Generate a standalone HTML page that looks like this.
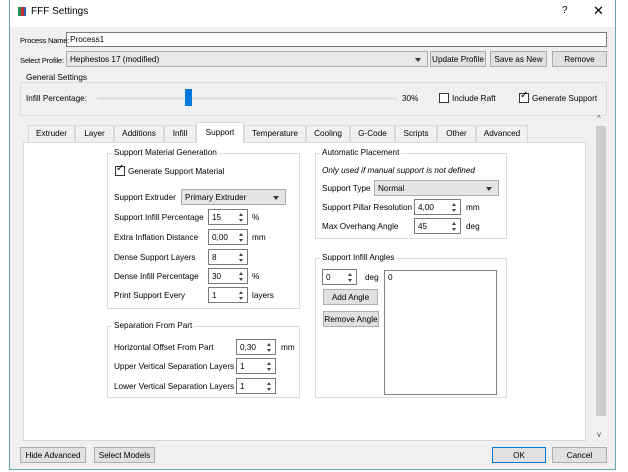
<!DOCTYPE html>
<html><head><meta charset="utf-8"><style>
*{box-sizing:border-box;margin:0;padding:0}
body{width:628px;height:472px;background:#fff;font-family:"Liberation Sans",sans-serif;font-size:8.2px;color:#000;position:relative;overflow:hidden}
.a{position:absolute;white-space:nowrap}
#win{position:absolute;left:9px;top:0;width:607px;height:470px;border:1px solid #6aa5b3;border-top:none;background:#f0f0f0}
.in{position:absolute;background:#fff;border:1px solid #7a7a7a;padding-left:3px;line-height:14px;white-space:nowrap}
.btn{position:absolute;background:#e1e1e1;border:1px solid #adadad;text-align:center;line-height:15px;white-space:nowrap;overflow:hidden}
.grp{position:absolute;border:1px solid #dcdcdc}
.gl{position:absolute;background:#fff;padding:0 2px;line-height:10px;white-space:nowrap}
.cb{position:absolute;width:10px;height:10px;border:1px solid #333;background:#fff}
.spin{position:absolute;background:#fff;border:1px solid #7a7a7a;height:16px;line-height:15px;padding-left:3px;white-space:nowrap}
.spin:before{content:"";position:absolute;right:4px;top:3px;border:2px solid transparent;border-bottom:3px solid #444;border-top:none}
.spin:after{content:"";position:absolute;right:4px;top:9px;border:2px solid transparent;border-top:3px solid #444;border-bottom:none}
.cmb{position:absolute;background:#e5e5e5;border:1px solid #adadad;height:16px;line-height:15px;padding-left:3px;white-space:nowrap}
.cmb:after{content:"";position:absolute;right:6px;top:6px;border:3px solid transparent;border-top:4px solid #333}
.tab{position:absolute;top:125px;height:17px;border:1px solid #d9d9d9;border-bottom:none;background:#f0f0f0;text-align:center;line-height:16px;white-space:nowrap}
</style></head><body>
<div id="win"></div>
<div class="a" style="left:0;top:0;width:628px;height:27px;background:#fff"></div>
<div class="a" style="left:9px;top:0;width:1px;height:470px;background:#6aa5b3"></div>
<div class="a" style="left:615px;top:0;width:1px;height:470px;background:#6aa5b3"></div>
<div class="a" style="left:18px;top:7px;width:3px;height:9px;background:#2a8a5a"></div>
<div class="a" style="left:21px;top:7px;width:3px;height:9px;background:#c03030"></div>
<div class="a" style="left:24px;top:7px;width:2px;height:9px;background:#3060b0"></div>
<div class="a" style="left:31px;top:6px;font-size:10px">FFF Settings</div>
<div class="a" style="left:562px;top:5px;font-size:10px">?</div>
<div class="a" style="left:593px;top:3px;font-size:13px">✕</div>

<div class="in" style="left:66px;top:32px;width:541px;height:15px">Process1</div>
<div class="a" style="left:20px;top:36px;font-size:7.6px;letter-spacing:-0.2px">Process Name:</div>
<div class="cmb" style="left:66px;top:51px;width:362px;background:#e8e8e8">Hephestos 17 (modified)</div>
<div class="a" style="left:20px;top:56px;font-size:7.6px;letter-spacing:-0.2px">Select Profile:</div>
<div class="btn" style="left:430px;top:51px;width:56px;height:16px">Update Profile</div>
<div class="btn" style="left:490px;top:51px;width:57px;height:16px">Save as New</div>
<div class="btn" style="left:552px;top:51px;width:55px;height:16px">Remove</div>

<div class="grp" style="left:20px;top:82px;width:587px;height:34px"></div>
<div class="a" style="left:25px;top:73px;background:#f0f0f0;padding:0 1px">General Settings</div>
<div class="a" style="left:26px;top:94px">Infill Percentage:</div>
<div class="a" style="left:97px;top:97px;width:301px;height:3px;background:#e0e0e0;border:1px solid #e6e6e6"></div>
<div class="a" style="left:185px;top:89px;width:7px;height:17px;background:#0078d7"></div>
<div class="a" style="left:402px;top:94px">30%</div>
<div class="cb" style="left:439px;top:93px"></div>
<div class="a" style="left:452px;top:94px">Include Raft</div>
<div class="cb" style="left:519px;top:93px"></div>
<div class="a" style="left:520px;top:90px;font-size:10px">✓</div>
<div class="a" style="left:532px;top:94px">Generate Support</div>

<div class="a" style="left:23px;top:142px;width:563px;height:299px;background:#fff;border:1px solid #d9d9d9"></div>
<div class="tab" style="left:28px;width:47px">Extruder</div>
<div class="tab" style="left:75px;width:39px">Layer</div>
<div class="tab" style="left:114px;width:50px">Additions</div>
<div class="tab" style="left:164px;width:32px">Infill</div>
<div class="tab" style="left:196px;width:48px;top:122px;height:21px;background:#fff;line-height:20px">Support</div>
<div class="tab" style="left:244px;width:62px">Temperature</div>
<div class="tab" style="left:306px;width:44px">Cooling</div>
<div class="tab" style="left:350px;width:45px">G-Code</div>
<div class="tab" style="left:395px;width:42px">Scripts</div>
<div class="tab" style="left:437px;width:39px">Other</div>
<div class="tab" style="left:476px;width:52px">Advanced</div>

<div class="a" style="left:595px;top:118px;width:12px;height:324px;background:#f0f0f0"></div>
<div class="a" style="left:596px;top:126px;width:10px;height:290px;background:#cdcdcd"></div>
<div class="a" style="left:597px;top:114px;font-size:8px;color:#555">^</div>
<div class="a" style="left:597px;top:430px;font-size:8px;color:#555">v</div>

<div class="grp" style="left:107px;top:153px;width:193px;height:156px"></div>
<div class="gl" style="left:112px;top:148px">Support Material Generation</div>
<div class="cb" style="left:115px;top:166px"></div>
<div class="a" style="left:116px;top:163px;font-size:10px">✓</div>
<div class="a" style="left:128px;top:167px">Generate Support Material</div>
<div class="a" style="left:114px;top:193px">Support Extruder</div>
<div class="cmb" style="left:181px;top:189px;width:105px">Primary Extruder</div>
<div class="a" style="left:114px;top:213px">Support Infill Percentage</div>
<div class="spin" style="left:208px;top:209px;width:40px">15</div><div class="a" style="left:252px;top:213px">%</div>
<div class="a" style="left:114px;top:233px">Extra Inflation Distance</div>
<div class="spin" style="left:208px;top:229px;width:40px">0,00</div><div class="a" style="left:252px;top:233px">mm</div>
<div class="a" style="left:114px;top:253px">Dense Support Layers</div>
<div class="spin" style="left:208px;top:249px;width:40px">8</div>
<div class="a" style="left:114px;top:272px">Dense Infill Percentage</div>
<div class="spin" style="left:208px;top:268px;width:40px">30</div><div class="a" style="left:252px;top:272px">%</div>
<div class="a" style="left:114px;top:291px">Print Support Every</div>
<div class="spin" style="left:208px;top:287px;width:40px">1</div><div class="a" style="left:252px;top:291px">layers</div>

<div class="grp" style="left:107px;top:326px;width:193px;height:72px"></div>
<div class="gl" style="left:112px;top:321px">Separation From Part</div>
<div class="a" style="left:114px;top:343px">Horizontal Offset From Part</div>
<div class="spin" style="left:236px;top:339px;width:40px">0,30</div><div class="a" style="left:281px;top:343px">mm</div>
<div class="a" style="left:114px;top:362px">Upper Vertical Separation Layers</div>
<div class="spin" style="left:236px;top:358px;width:40px">1</div>
<div class="a" style="left:114px;top:382px">Lower Vertical Separation Layers</div>
<div class="spin" style="left:236px;top:378px;width:40px">1</div>

<div class="grp" style="left:315px;top:153px;width:192px;height:86px"></div>
<div class="gl" style="left:320px;top:148px">Automatic Placement</div>
<div class="a" style="left:322px;top:166px;font-style:italic">Only used if manual support is not defined</div>
<div class="a" style="left:322px;top:184px">Support Type</div>
<div class="cmb" style="left:374px;top:180px;width:125px">Normal</div>
<div class="a" style="left:322px;top:203px">Support Pillar Resolution</div>
<div class="spin" style="left:414px;top:199px;width:47px">4,00</div><div class="a" style="left:466px;top:203px">mm</div>
<div class="a" style="left:322px;top:222px">Max Overhang Angle</div>
<div class="spin" style="left:414px;top:218px;width:47px">45</div><div class="a" style="left:466px;top:222px">deg</div>

<div class="grp" style="left:315px;top:258px;width:192px;height:140px"></div>
<div class="gl" style="left:320px;top:253px">Support Infill Angles</div>
<div class="spin" style="left:322px;top:269px;width:35px">0</div><div class="a" style="left:365px;top:273px">deg</div>
<div class="btn" style="left:323px;top:289px;width:55px;height:16px">Add Angle</div>
<div class="btn" style="left:323px;top:311px;width:56px;height:16px">Remove Angle</div>
<div class="a" style="left:384px;top:270px;width:113px;height:125px;border:1px solid #828282;background:#fff;padding:2px 3px">0</div>

<div class="btn" style="left:20px;top:447px;width:66px;height:16px">Hide Advanced</div>
<div class="btn" style="left:94px;top:447px;width:61px;height:16px">Select Models</div>
<div class="btn" style="left:492px;top:447px;width:54px;height:16px;border-color:#0078d7">OK</div>
<div class="btn" style="left:552px;top:447px;width:55px;height:16px">Cancel</div>
</body></html>
